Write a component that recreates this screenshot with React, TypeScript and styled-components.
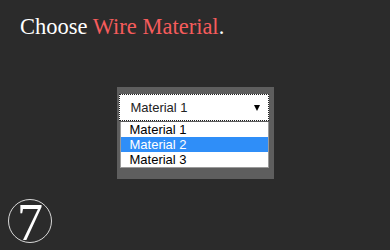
import React from "react";
import styled, { createGlobalStyle } from "styled-components";

const GlobalStyle = createGlobalStyle`
  html, body {
    margin: 0;
    padding: 0;
    background: #2b2b2b;
  }
`;

const Page = styled.div`
  width: 390px;
  height: 250px;
  display: flex;
  flex-direction: column;
  background: #2b2b2b;
  overflow: hidden;
`;

const Title = styled.h1`
  margin: 0;
  padding: 14px 0 0 20px;
  font-family: "Liberation Serif", serif;
  font-weight: normal;
  font-size: 22.5px;
  line-height: 26px;
  color: #ffffff;
`;

const Accent = styled.span`
  color: #f65c5c;
`;

const Panel = styled.div`
  align-self: center;
  width: 157px;
  height: 92px;
  margin-top: 47px;
  padding: 7px 0 0 2px;
  box-sizing: border-box;
  background: #5e5e5e;
`;

const SelectWrap = styled.div`
  position: relative;
  width: 150px;
`;

const SelectBox = styled.div`
  height: 27px;
  box-sizing: border-box;
  display: flex;
  align-items: center;
  justify-content: space-between;
  padding: 0 8px 0 11px;
  background: #ffffff;
  border: 1px dotted #202020;
  font-family: "Liberation Sans", Arial, sans-serif;
  font-size: 13px;
  color: #222;
`;

const Arrow = styled.span`
  width: 0;
  height: 0;
  border-left: 3.5px solid transparent;
  border-right: 3.5px solid transparent;
  border-top: 6px solid #000;
`;

const List = styled.ul`
  position: absolute;
  top: 28px;
  left: 1px;
  width: 149px;
  margin: 0;
  padding: 0;
  list-style: none;
  box-sizing: border-box;
  background: #fff;
  border: 1px solid #9a9a9a;
  border-top: none;
`;

const Option = styled.li<{ $active?: boolean }>`
  height: 15px;
  line-height: 15px;
  padding-left: 9px;
  font-family: "Liberation Sans", Arial, sans-serif;
  font-size: 13px;
  color: ${(p) => (p.$active ? "#ffffff" : "#000000")};
  background: ${(p) => (p.$active ? "#2f8ef8" : "#ffffff")};
`;

const StepBadge = styled.div`
  margin: 20px 0 0 8px;
  width: 44px;
  height: 44px;
  box-sizing: border-box;
  border: 1px solid #d8d8d8;
  border-radius: 50%;
  display: flex;
  align-items: center;
  justify-content: center;
  font-family: "Liberation Serif", serif;
  font-size: 52px;
  line-height: 1;
  color: #ffffff;
  padding-top: 3px;
`;

const options = ["Material 1", "Material 2", "Material 3"];

export default function App() {
  return (
    <Page>
      <GlobalStyle />
      <Title>
        Choose <Accent>Wire Material</Accent>.
      </Title>
      <Panel>
        <SelectWrap>
          <SelectBox>
            <span>Material 1</span>
            <Arrow />
          </SelectBox>
          <List>
            {options.map((o, i) => (
              <Option key={o} $active={i === 1}>
                {o}
              </Option>
            ))}
          </List>
        </SelectWrap>
      </Panel>
      <StepBadge>7</StepBadge>
    </Page>
  );
}
